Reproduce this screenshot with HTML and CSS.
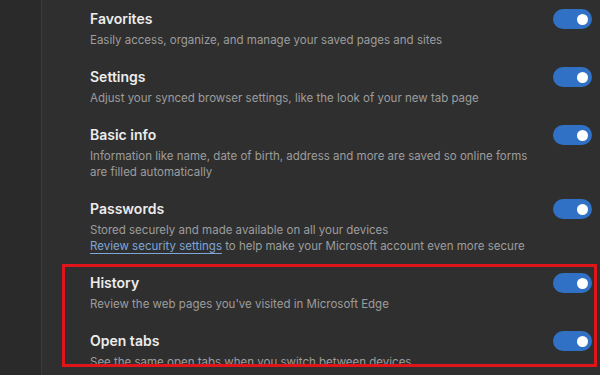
FILE: index.html
```html
<!DOCTYPE html>
<html lang="en">
<head>
  <meta charset="UTF-8">
  <meta name="viewport" content="width=device-width, initial-scale=1.0">
  <title>Sync settings</title>
  <link rel="stylesheet" href="styles.css">
</head>
<body>
  <div class="page">
    <div class="sidebar"></div>
    <main class="sync-list">
      <div class="sync-row">
        <div class="sync-text">
          <h3>Favorites</h3>
          <p>Easily access, organize, and manage your saved pages and sites</p>
        </div>
        <span class="toggle on" role="switch" aria-checked="true"></span>
      </div>
      <div class="sync-row">
        <div class="sync-text">
          <h3>Settings</h3>
          <p>Adjust your synced browser settings, like the look of your new tab page</p>
        </div>
        <span class="toggle on" role="switch" aria-checked="true"></span>
      </div>
      <div class="sync-row">
        <div class="sync-text">
          <h3>Basic info</h3>
          <p>Information like name, date of birth, address and more are saved so online forms are filled automatically</p>
        </div>
        <span class="toggle on" role="switch" aria-checked="true"></span>
      </div>
      <div class="sync-row">
        <div class="sync-text">
          <h3>Passwords</h3>
          <p>Stored securely and made available on all your devices<br>
            <a href="#">Review security settings</a> to help make your Microsoft account even more secure</p>
        </div>
        <span class="toggle on" role="switch" aria-checked="true"></span>
      </div>

      <!-- highlighted group -->
      <div class="highlight">
        <div class="sync-row">
          <div class="sync-text">
            <h3>History</h3>
            <p>Review the web pages you've visited in Microsoft Edge</p>
          </div>
          <span class="toggle on" role="switch" aria-checked="true"></span>
        </div>
        <div class="sync-row">
          <div class="sync-text">
            <h3>Open tabs</h3>
            <p>See the same open tabs when you switch between devices</p>
          </div>
          <span class="toggle on" role="switch" aria-checked="true"></span>
        </div>
      </div>
    </main>
  </div>
</body>
</html>
```

FILE: styles.css
```css
:root {
  --sidebar-bg: #2a2a2a;
  --main-bg: #2f2f2f;
  --divider: #3c3c3c;
  --title-color: #ececec;
  --desc-color: #9d9d9d;
  --link-color: #7ea6d6;
  --toggle-on: #3071c6;
  --highlight: #e0141b;
}

* {
  margin: 0;
  padding: 0;
  box-sizing: border-box;
}

body {
  font-family: 'Inter', 'Noto Sans', Arial, sans-serif;
  background: var(--main-bg);
  width: 600px;
  height: 375px;
  overflow: hidden;
}

.page {
  display: flex;
  height: 375px;
}

.sidebar {
  width: 42px;
  flex-shrink: 0;
  background: var(--sidebar-bg);
  border-right: 1px solid var(--divider);
}

.sync-list {
  flex: 1;
  display: flex;
  flex-direction: column;
  gap: 19px;
  padding: 9px 8px 0 48px;
}

.sync-row {
  display: flex;
  align-items: flex-start;
  justify-content: space-between;
  gap: 20px;
}

.sync-text h3 {
  font-size: 14px;
  line-height: 20px;
  font-weight: 600;
  color: var(--title-color);
}

.sync-text p {
  margin-top: 3px;
  font-size: 11.5px;
  line-height: 16px;
  color: var(--desc-color);
  max-width: 450px;
}

.sync-text a {
  color: var(--link-color);
  text-decoration: underline;
  text-underline-offset: 3px;
}

.toggle {
  flex-shrink: 0;
  width: 39px;
  height: 20px;
  border-radius: 10px;
  background: #555;
  display: flex;
  align-items: center;
  padding: 0 4px;
}

.toggle::after {
  content: '';
  width: 11px;
  height: 11px;
  border-radius: 50%;
  background: #fff;
}

.toggle.on {
  background: var(--toggle-on);
  justify-content: flex-end;
}

.highlight {
  display: flex;
  flex-direction: column;
  gap: 19px;
  height: 103px;
  overflow: hidden;
  margin: -9px -5px 0 -28px;
  padding: 6px 2px 0 25px;
  border: 3px solid var(--highlight);
}
```
